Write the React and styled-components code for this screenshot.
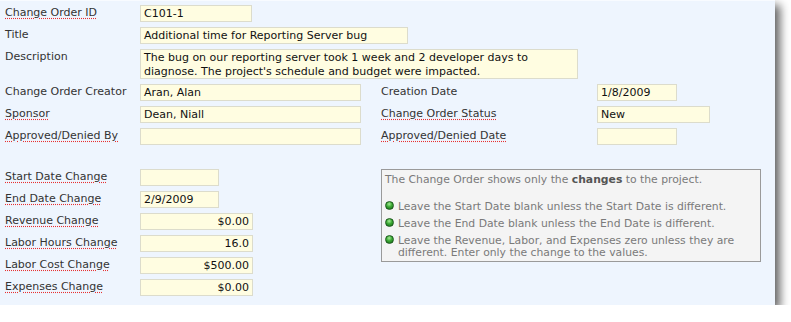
import styled, { createGlobalStyle } from "styled-components";

const GlobalStyle = createGlobalStyle`
  html, body {
    margin: 0;
    padding: 0;
    background: #ffffff;
  }
  body {
    font-family: "DejaVu Sans", Verdana, sans-serif;
  }
`;

const Panel = styled.div`
  width: 775px;
  height: 305px;
  box-sizing: border-box;
  background: #eef5fe;
  border-top: 1px solid #f8fbff;
  box-shadow: 5px 5px 9px rgba(0, 0, 0, 0.62);
  padding: 4px 0 0 5px;
  display: flex;
  flex-direction: column;
`;

const TopGrid = styled.div`
  display: grid;
  grid-template-columns: 135px 241px 216px 1fr;
  row-gap: 5px;
`;

const Label = styled.div`
  font-size: 11px;
  color: #333;
  line-height: 16px;
  white-space: nowrap;
  align-self: start;
  & > span {
    text-decoration: ${(p) => (p.$spell ? "underline dotted #e83030" : "none")};
    text-underline-offset: 2px;
  }
`;

const Field = styled.div`
  box-sizing: border-box;
  width: ${(p) => p.$w}px;
  height: ${(p) => p.$h || 17}px;
  background: #fffde1;
  border: 1px solid #dcdccc;
  font-size: 11px;
  color: #111;
  line-height: ${(p) => (p.$h ? "14px" : "15px")};
  padding: ${(p) => (p.$h ? "1px 3px" : "0 3px")};
  text-align: ${(p) => (p.$right ? "right" : "left")};
  white-space: ${(p) => (p.$h ? "normal" : "nowrap")};
  overflow: hidden;
`;

const SpanAll = styled.div`
  grid-column: ${(p) => p.$from} / -1;
`;

const Lower = styled.div`
  display: grid;
  grid-template-columns: 376px 380px;
  margin-top: 24px;
`;

const LowerFields = styled.div`
  display: grid;
  grid-template-columns: 135px 1fr;
  row-gap: 5px;
`;

const InfoBox = styled.div`
  box-sizing: border-box;
  width: 380px;
  height: 93px;
  background: #f4f4f4;
  border: 1px solid #9a9a9a;
  padding: 3px 3px 0 3px;
  font-size: 10.8px;
  color: #7a7a7a;
  line-height: 13px;
  b {
    color: #555;
  }
`;

const BulletList = styled.ul`
  list-style: none;
  margin: 15px 0 0 0;
  padding: 0;
`;

const Bullet = styled.li`
  display: flex;
  gap: 4px;
  margin-bottom: 5px;
  line-height: 12px;
`;

const Dot = styled.span`
  flex: 0 0 9px;
  width: 9px;
  height: 9px;
  margin-top: 0;
  box-sizing: border-box;
  border-radius: 50%;
  border: 1px solid #1c5a1c;
  background: radial-gradient(circle at 45% 30%, #a8ec98 0%, #3aa832 45%, #17661a 100%);
`;

const L = ({ children, spell }) => (
  <Label $spell={spell}>
    <span>{children}</span>
  </Label>
);

export default function App() {
  return (
    <>
      <GlobalStyle />
      <Panel>
        <TopGrid>
          <L spell>Change Order ID</L>
          <SpanAll $from={2}>
            <Field $w={112}>C101-1</Field>
          </SpanAll>

          <L>Title</L>
          <SpanAll $from={2}>
            <Field $w={268}>Additional time for Reporting Server bug</Field>
          </SpanAll>

          <L>Description</L>
          <SpanAll $from={2}>
            <Field $w={438} $h={30}>
              The bug on our reporting server took 1 week and 2 developer days to diagnose.
              The project's schedule and budget were impacted.
            </Field>
          </SpanAll>

          <L>Change Order Creator</L>
          <Field $w={221}>Aran, Alan</Field>
          <L>Creation Date</L>
          <Field $w={80}>1/8/2009</Field>

          <L spell>Sponsor</L>
          <Field $w={221}>Dean, Niall</Field>
          <L spell>Change Order Status</L>
          <Field $w={113}>New</Field>

          <L spell>Approved/Denied By</L>
          <Field $w={221}></Field>
          <L spell>Approved/Denied Date</L>
          <Field $w={80}></Field>
        </TopGrid>

        <Lower>
          <LowerFields>
            <L spell>Start Date Change</L>
            <Field $w={79}></Field>
            <L spell>End Date Change</L>
            <Field $w={79}>2/9/2009</Field>
            <L spell>Revenue Change</L>
            <Field $w={113} $right>$0.00</Field>
            <L spell>Labor Hours Change</L>
            <Field $w={113} $right>16.0</Field>
            <L spell>Labor Cost Change</L>
            <Field $w={113} $right>$500.00</Field>
            <L spell>Expenses Change</L>
            <Field $w={113} $right>$0.00</Field>
          </LowerFields>

          <InfoBox>
            The Change Order shows only the <b>changes</b> to the project.
            <BulletList>
              <Bullet>
                <Dot />
                <span>Leave the Start Date blank unless the Start Date is different.</span>
              </Bullet>
              <Bullet>
                <Dot />
                <span>Leave the End Date blank unless the End Date is different.</span>
              </Bullet>
              <Bullet>
                <Dot />
                <span>
                  Leave the Revenue, Labor, and Expenses zero unless they are different. Enter
                  only the change to the values.
                </span>
              </Bullet>
            </BulletList>
          </InfoBox>
        </Lower>
      </Panel>
    </>
  );
}
